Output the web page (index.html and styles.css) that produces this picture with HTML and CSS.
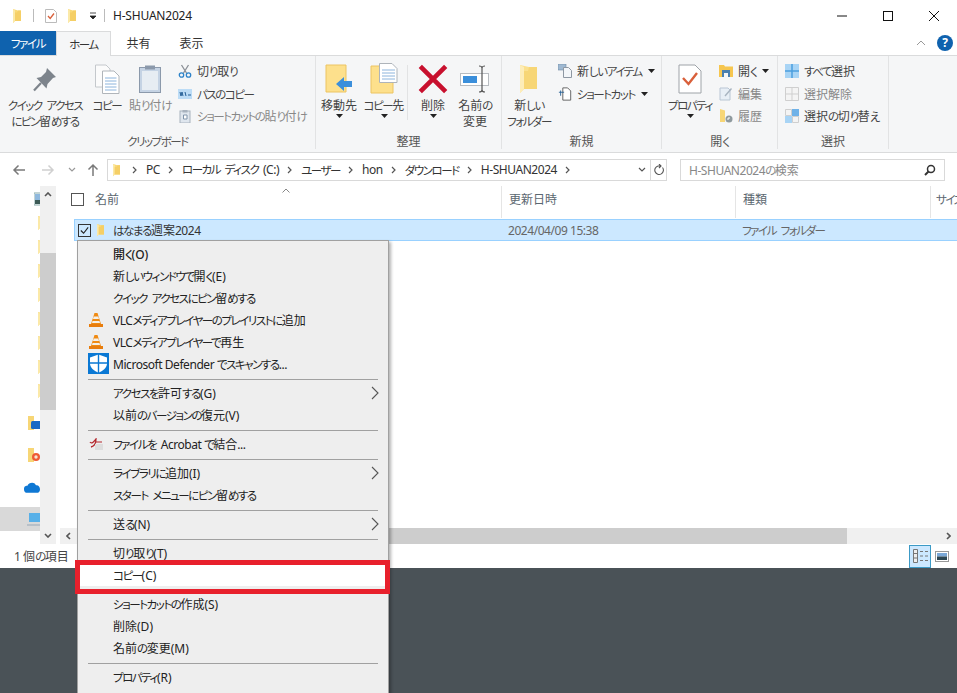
FILE: index.html
```html
<!DOCTYPE html>
<html lang="ja">
<head>
<meta charset="utf-8">
<title>H-SHUAN2024</title>
<link rel="stylesheet" href="styles.css">
</head>
<body>
<svg class="defs" width="0" height="0">
  <defs>
    <symbol id="folder" viewBox="0 0 10 16"><path d="M1 1 L6 2.500 H9 V13 H3 L1 15 Z" fill="#f9d976"/><path d="M1 1 L3 2.500 V13 L1 15 Z" fill="#fbe9a8"/><path d="M6 2.500 H9 V13 H3 L3 4.500 H5 Z" fill="#f5cf66"/></symbol>
    <symbol id="caret" viewBox="0 0 7 4"><path d="M0 0 H7 L3.500 4 Z" fill="#222"/></symbol>
    <symbol id="chev" viewBox="0 0 6 8"><path d="M1 1 L4 4 L1 7" fill="none" stroke="#555" stroke-width="1.200"/></symbol>
    <symbol id="vlc" viewBox="0 0 16 16"><path d="M6.500 1 H9.500 L13 12 H3 Z" fill="#f08a12"/><path d="M5.700 4.500 H10.300 L11 7 H5 Z" fill="#f4f0e8"/><path d="M1 12 H15 V15 H1 Z" fill="#e87d0d"/><path d="M4.500 9 H11.500 L12 11 H4 Z" fill="#f4f0e8"/></symbol>
    <symbol id="sub" viewBox="0 0 8 14"><path d="M1 1 L7 7 L1 13" fill="none" stroke="#555" stroke-width="1.100"/></symbol>
  </defs>
</svg>
<div class="window">
  <header class="titlebar">
    <svg class="qa-folder"><use href="#folder"/></svg>
    <span class="qa-sep"></span>
    <svg class="qa-check" viewBox="0 0 12 14"><path d="M.5.5 H8.500 L11.500 3.500 V13.500 H.5 Z" fill="#fff" stroke="#bbb"/><path d="M3 7 L5.200 9.500 L9 4.500" fill="none" stroke="#d9603b" stroke-width="1.300"/></svg>
    <svg class="qa-folder qa-folder2"><use href="#folder"/></svg>
    <svg class="qa-drop" viewBox="0 0 8 8"><path d="M1 1 H7 M1 4 H7 L4 7 Z" fill="#222" stroke="#222" stroke-width=".8"/></svg>
    <span class="qa-sep qa-sep2"></span>
    <span class="title-text">H-SHUAN2024</span>
    <span class="win-btns">
      <svg class="win-btn" viewBox="0 0 12 12"><path d="M1 6 H11" stroke="#111" fill="none"/></svg>
      <svg class="win-btn" viewBox="0 0 12 12"><rect x="1.500" y="1.500" width="9" height="9" fill="none" stroke="#111"/></svg>
      <svg class="win-btn" viewBox="0 0 12 12"><path d="M1 1 L11 11 M11 1 L1 11" stroke="#111" fill="none"/></svg>
    </span>
  </header>

  <nav class="tabs">
    <span class="tab tab-file">ファイル</span>
    <span class="tab tab-home">ホーム</span>
    <span class="tab tab-share"><span class="h">共有</span></span>
    <span class="tab tab-view"><span class="h">表示</span></span>
    <span class="tabs-right">
      <svg class="collapse" viewBox="0 0 10 6"><path d="M1 5 L5 1 L9 5" fill="none" stroke="#999"/></svg>
      <span class="help">?</span>
    </span>
  </nav>

  <section class="ribbon">
    <div class="group g-clip">
      <div class="group-body">
        <div class="big b-pin">
          <span class="big-icon"><svg class="i30" viewBox="0 0 30 30"><path d="M17 4 L26 13 L23 14 L17.500 20 L16.500 24.500 L6.500 14 L11 13 L16 8 Z" fill="#7d848c"/><path d="M11 19 L4 26.500" stroke="#7d848c" stroke-width="2.200"/></svg></span>
          <span class="big-label">クイック アクセス<br>にピン<span class="h">留</span>めする</span>
        </div>
        <div class="big b-copy">
          <span class="big-icon"><svg class="i30" viewBox="0 0 26 30"><path d="M1.500 1 H12 L16 5 V23 H1.500 Z" fill="#fbfbfb" stroke="#c4c8cc"/><path d="M8.500 7 H20 L25 12 V29.500 H8.500 Z" fill="#fff" stroke="#b0b5ba"/><path d="M11 14 H22.500 M11 17 H22.500 M11 20 H22.500 M11 23 H22.500 M11 26 H22.500" stroke="#8cb4dc"/></svg></span>
          <span class="big-label">コピー</span>
        </div>
        <div class="big b-paste disabled">
          <span class="big-icon"><svg class="i30" viewBox="0 0 24 30"><rect x="1.500" y="3.500" width="21" height="25" fill="#c5d3e4" stroke="#8b99ab"/><rect x="4" y="7" width="16" height="19" fill="#e7edf3"/><rect x="7" y="1.500" width="10" height="4" fill="#8b99ab"/></svg></span>
          <span class="big-label"><span class="h">貼</span>り<span class="h">付</span>け</span>
        </div>
        <div class="small-col sc-clip">
          <div class="small"><svg class="i14" viewBox="0 0 14 14"><path d="M3.500 1 L8.500 9 M10.500 1 L5.500 9" stroke="#8a8f96" stroke-width="1.300"/><circle cx="3.500" cy="11" r="2.200" fill="none" stroke="#2e83c9" stroke-width="1.300"/><circle cx="10.500" cy="11" r="2.200" fill="none" stroke="#2e83c9" stroke-width="1.300"/></svg><span><span class="h">切</span>り<span class="h">取</span>り</span></div>
          <div class="small"><svg class="i14" viewBox="0 0 14 14"><rect x="0" y="2" width="14" height="10" fill="#bcdcf6"/><path d="M2 5 L3 9 L4 5 L5 9 M7 5 L8 9 M10 8 H13" stroke="#245f96" fill="none"/></svg><span>パスのコピー</span></div>
          <div class="small disabled"><svg class="i14" viewBox="0 0 14 14"><rect x="2" y="2" width="10" height="12" fill="#dfe6ee" stroke="#a8b2be"/><rect x="4.500" y="1" width="5" height="2.500" fill="#a8b2be"/><path d="M5.500 6 H9 V10 H5.500 Z" fill="#fff" stroke="#8094aa"/></svg><span>ショートカットの<span class="h">貼</span>り<span class="h">付</span>け</span></div>
        </div>
      </div>
      <div class="group-label">クリップボード</div>
    </div>

    <div class="group g-org">
      <div class="group-body">
        <div class="big b-move">
          <span class="big-icon"><svg class="i30" viewBox="0 0 28 30"><path d="M1 1 H21 V28 H1 Z" fill="#fde08c" stroke="#ecc463"/><path d="M11 20 L19 13 V17 H27 V23 H19 V27 Z" fill="#3b8fdb"/></svg></span>
          <span class="big-label"><span class="h">移動先</span></span>
          <svg class="drop"><use href="#caret"/></svg>
        </div>
        <div class="big b-copyto">
          <span class="big-icon"><svg class="i32" viewBox="0 0 28 32"><path d="M1 3 H23 V30 H1 Z" fill="#fde08c" stroke="#ecc463"/><path d="M9.500 .5 H22 L27 5.500 V19.500 H9.500 Z" fill="#fff" stroke="#aeb4ba"/><path d="M12 7 H25 M12 10 H25 M12 13 H25 M12 16 H25" stroke="#8cb4dc"/></svg></span>
          <span class="big-label">コピー<span class="h">先</span></span>
          <svg class="drop"><use href="#caret"/></svg>
        </div>
        <span class="v-sep"></span>
        <div class="big b-del">
          <span class="big-icon"><svg class="i30" viewBox="0 0 26 26"><path d="M2 2 L24 24 M24 2 L2 24" stroke="#c8102e" stroke-width="4"/></svg></span>
          <span class="big-label"><span class="h">削除</span></span>
          <svg class="drop"><use href="#caret"/></svg>
        </div>
        <div class="big b-ren">
          <span class="big-icon"><svg class="i30w" viewBox="0 0 30 28"><rect x=".5" y="8.500" width="28" height="12" fill="#fff" stroke="#b8bcc1"/><rect x="3" y="11" width="14" height="7" fill="#3b8fdb"/><path d="M19 1 C21 1 22 2 22 3 C22 2 23 1 25 1 M22 3 V25 M19 27 C21 27 22 26 22 25 C22 26 23 27 25 27" fill="none" stroke="#555" stroke-width="1.200"/></svg></span>
          <span class="big-label"><span class="h">名前</span>の<br><span class="h">変更</span></span>
        </div>
      </div>
      <div class="group-label"><span class="h">整理</span></div>
    </div>

    <div class="group g-new">
      <div class="group-body">
        <div class="big b-newf">
          <span class="big-icon"><svg class="i30" viewBox="0 0 20 30"><path d="M1 1 L10 3 H18 V25 H5 L1 29 Z" fill="#fbe08e"/><path d="M1 1 L5 3 V25 L1 29 Z" fill="#fdedb9"/><path d="M10 3 H18 V25 H5 V7 H9 Z" fill="#f7d676"/></svg></span>
          <span class="big-label"><span class="h">新</span>しい<br>フォルダー</span>
        </div>
        <div class="small-col sc-new">
          <div class="small"><svg class="i14" viewBox="0 0 14 14"><rect x="0" y="0" width="8" height="6" fill="#9fb9d2" stroke="#6e8aa6" stroke-width=".6"/><path d="M5.500 3.500 H10.500 L13.500 6.500 V13.500 H5.500 Z" fill="#f3f6f9" stroke="#8e98a3"/></svg><span><span class="h">新</span>しいアイテム</span><svg class="drop-inline"><use href="#caret"/></svg></div>
          <div class="small"><svg class="i14" viewBox="0 0 14 16"><path d="M4.500 1 H10 L13.500 4.500 V15 H4.500 Z" fill="#fff" stroke="#555"/><path d="M0 6 H6 M2 4 V10" stroke="#245f96" stroke-width="1"/></svg><span>ショートカット</span><svg class="drop-inline"><use href="#caret"/></svg></div>
        </div>
      </div>
      <div class="group-label"><span class="h">新規</span></div>
    </div>

    <div class="group g-open">
      <div class="group-body">
        <div class="big b-prop">
          <span class="big-icon"><svg class="i30" viewBox="0 0 24 30"><path d="M1 1 H17 L23 7 V29 H1 Z" fill="#fff" stroke="#9ea3a8"/><path d="M5 14 L10.500 20 L19 9" fill="none" stroke="#d9603b" stroke-width="2.400"/></svg></span>
          <span class="big-label">プロパティ</span>
          <svg class="drop"><use href="#caret"/></svg>
        </div>
        <div class="small-col sc-open">
          <div class="small"><svg class="i14" viewBox="0 0 14 14"><path d="M0 1 H5 L6 2.500 H14 V13 H0 Z" fill="#f6c64f"/><rect x="3" y="6" width="8" height="7" fill="#4a7fb0"/><rect x="5" y="9" width="4" height="4" fill="#f6f6f6"/></svg><span><span class="h">開</span>く</span><svg class="drop-inline"><use href="#caret"/></svg></div>
          <div class="small disabled"><svg class="i14" viewBox="0 0 14 14"><path d="M1 1 H9 L11 3 V13 H1 Z" fill="#e8eff6" stroke="#b9c6d4"/><path d="M6 9 L12.500 1.500" stroke="#a8b4c0" stroke-width="1.400"/></svg><span><span class="h">編集</span></span></div>
          <div class="small disabled"><svg class="i14" viewBox="0 0 14 14"><path d="M1 0 L6 1.500 V13 H1 Z" fill="#f7d676"/><circle cx="10" cy="10" r="3.500" fill="#8f9a9e"/><path d="M10 8 V10 H8" stroke="#fff" fill="none"/></svg><span><span class="h">履歴</span></span></div>
        </div>
      </div>
      <div class="group-label"><span class="h">開</span>く</div>
    </div>

    <div class="group g-sel">
      <div class="group-body">
        <div class="small-col sc-sel">
          <div class="small"><svg class="i14" viewBox="0 0 14 14"><rect width="14" height="14" fill="#a8d4f5"/><path d="M7 0 V14 M0 7 H14" stroke="#4b9ede" stroke-width="1.500"/></svg><span>すべて<span class="h">選択</span></span></div>
          <div class="small disabled"><svg class="i14" viewBox="0 0 14 14"><path d="M.5 .5 H13.500 V13.500 H.5 Z M7 0 V14 M0 7 H14" fill="#f4f4f4" stroke="#cfcfcf"/></svg><span><span class="h">選択解除</span></span></div>
          <div class="small"><svg class="i14" viewBox="0 0 14 14"><rect x="7" y="0" width="7" height="7" fill="#6fb2e8"/><rect x="0" y="7" width="7" height="7" fill="#a8d4f5"/><path d="M.5 .5 H6.500 V6.500 H.5 Z M7.500 7.500 H13.500 V13.500 H7.500 Z" fill="#f4f4f4" stroke="#cfcfcf"/></svg><span><span class="h">選択</span>の<span class="h">切</span>り<span class="h">替</span>え</span></div>
        </div>
      </div>
      <div class="group-label"><span class="h">選択</span></div>
    </div>
  </section>

  <section class="navrow">
    <svg class="nav-ico nav-back" viewBox="0 0 14 12"><path d="M13 6 H2 M6.500 1.500 L2 6 L6.500 10.500" fill="none" stroke="#7a7a7a" stroke-width="1.500"/></svg>
    <svg class="nav-ico nav-fwd" viewBox="0 0 14 12"><path d="M1 6 H12 M7.500 1.500 L12 6 L7.500 10.500" fill="none" stroke="#d0d0d0" stroke-width="1.500"/></svg>
    <svg class="nav-down" viewBox="0 0 8 5"><path d="M1 1 L4 4 L7 1" fill="none" stroke="#999" stroke-width="1.200"/></svg>
    <svg class="nav-ico nav-up" viewBox="0 0 12 14"><path d="M6 13 V2 M1.500 6.500 L6 2 L10.500 6.500" fill="none" stroke="#7a7a7a" stroke-width="1.500"/></svg>
    <div class="addr">
      <svg class="addr-folder"><use href="#folder"/></svg>
      <svg class="crumb-sep cs-1"><use href="#chev"/></svg><span class="crumb"><span class="l">PC</span></span>
      <svg class="crumb-sep"><use href="#chev"/></svg><span class="crumb">ローカル ディスク <span class="l">(C:)</span></span>
      <svg class="crumb-sep"><use href="#chev"/></svg><span class="crumb">ユーザー</span>
      <svg class="crumb-sep"><use href="#chev"/></svg><span class="crumb"><span class="l">hon</span></span>
      <svg class="crumb-sep"><use href="#chev"/></svg><span class="crumb">ダウンロード</span>
      <svg class="crumb-sep"><use href="#chev"/></svg><span class="crumb"><span class="l">H-SHUAN2024</span></span>
      <svg class="crumb-sep"><use href="#chev"/></svg>
      <span class="addr-end">
        <svg class="addr-drop" viewBox="0 0 8 5"><path d="M1 1 L4 4 L7 1" fill="none" stroke="#555" stroke-width="1.200"/></svg>
        <span class="addr-refresh"><svg class="i12" viewBox="0 0 12 12"><path d="M9.500 3.500 A4.300 4.300 0 1 1 5 2 H8 M6 0 L8 2 L6 4" fill="none" stroke="#555" stroke-width="1.100"/></svg></span>
      </span>
    </div>
    <div class="search">
      <span><span class="l">H-SHUAN2024</span>の<span class="h">検索</span></span>
      <svg class="i12" viewBox="0 0 12 12"><circle cx="7" cy="5" r="3.500" fill="none" stroke="#333" stroke-width="1.500"/><path d="M4.500 7.500 L1 11" stroke="#333" stroke-width="2"/></svg>
    </div>
  </section>

  <main class="main">
    <aside class="side">
      <div class="side-list">
        <div class="side-row"><svg class="i16" viewBox="0 0 16 16"><rect y="2" width="16" height="12" fill="#fff" stroke="#8aa"/><rect x="1" y="3" width="14" height="6" fill="#8fb8dd"/><rect x="1" y="9" width="14" height="4" fill="#3c5a56"/></svg></div>
        <div class="side-row"><svg class="i16"><use href="#folder"/></svg></div>
        <div class="side-row"><svg class="i16"><use href="#folder"/></svg></div>
        <div class="side-row"><svg class="i16"><use href="#folder"/></svg></div>
        <div class="side-row"><svg class="i16"><use href="#folder"/></svg></div>
        <div class="side-row"><svg class="i16"><use href="#folder"/></svg></div>
        <div class="side-row"><svg class="i16"><use href="#folder"/></svg></div>
        <div class="side-row"><svg class="i16"><use href="#folder"/></svg></div>
        <div class="side-row"><svg class="i16"><use href="#folder"/></svg></div>
        <div class="side-row side-gap sr-new"><svg class="i16w" viewBox="0 0 14 16"><path d="M1 1 H7 V15 H1 Z" fill="#f7d676"/><rect x="4" y="6" width="10" height="8" rx="1.500" fill="#1769c4"/></svg></div>
        <div class="side-row side-gap sr-new"><svg class="i16w" viewBox="0 0 14 16"><path d="M1 1 H7 V15 H1 Z" fill="#f7d676"/><circle cx="9" cy="10" r="4" fill="#ee5a35"/><circle cx="9" cy="10" r="1.700" fill="#f7e2d0"/></svg></div>
        <div class="side-row side-gap sr-cloud"><svg class="i16w" viewBox="0 0 14 10"><path d="M0 7 C0 4 2 4 3 4 C4 1 9 0 10.500 3.500 C12.500 3 14 5 14 7 C14 9 13 10 12 10 H2 C1 10 0 9 0 7 Z" fill="#0f78d4"/></svg></div>
        <div class="side-row side-gap sr-pc"><svg class="i16w" viewBox="0 0 14 16"><rect x="2" y="2" width="12" height="9" fill="#58b0e8"/><path d="M0 13 H14 V15 H0 Z" fill="#b8c0c8"/></svg></div>
      </div>
      <div class="side-scroll">
        <svg class="sb-arrow" viewBox="0 0 8 5"><path d="M1 4 L4 1 L7 4" fill="none" stroke="#555" stroke-width="1.600"/></svg>
        <div class="sb-track"><div class="sb-thumb"></div></div>
        <svg class="sb-arrow" viewBox="0 0 8 5"><path d="M1 1 L4 4 L7 1" fill="none" stroke="#555" stroke-width="1.600"/></svg>
      </div>
    </aside>
    <div class="content">
      <div class="head">
        <span class="h-check"><span class="cb"></span></span>
        <span class="col col-name"><span class="h">名前</span></span>
        <span class="col col-date"><span class="h">更新日時</span></span>
        <span class="col col-type"><span class="h">種類</span></span>
        <span class="col col-size">サイズ</span>
        <svg class="sort" viewBox="0 0 8 5"><path d="M.5 4.500 L4 1 L7.500 4.500" fill="none" stroke="#888"/></svg>
      </div>
      <div class="row">
        <span class="cb cb-on"><svg viewBox="0 0 12 12"><path d="M2 6 L5 9 L10 2.500" fill="none" stroke="#222" stroke-width="1.200"/></svg></span>
        <svg class="row-folder"><use href="#folder"/></svg>
        <span class="row-name">はなまる<span class="h">週案</span><span class="l">2024</span></span>
        <span class="row-date"><span class="l">2024/04/09 15:38</span></span>
        <span class="row-type">ファイル フォルダー</span>
      </div>
      <div class="spacer"></div>
      <div class="hscroll">
        <svg class="hs-arrow" viewBox="0 0 5 8"><path d="M4 1 L1 4 L4 7" fill="none" stroke="#555" stroke-width="1.600"/></svg>
        <div class="hs-track"><div class="hs-thumb"></div></div>
        <svg class="hs-arrow" viewBox="0 0 5 8"><path d="M1 1 L4 4 L1 7" fill="none" stroke="#555" stroke-width="1.600"/></svg>
      </div>
    </div>
  </main>

  <footer class="status">
    <span class="status-text"><span class="l">1 </span><span class="h">個</span>の<span class="h">項目</span></span>
    <span class="views">
      <span class="view view-on"><svg viewBox="0 0 17 14" class="view-ico"><path d="M1.500 .5 H5.500 V13.500 H1.500 Z M1.500 4.500 H5.500 M1.500 9 H5.500" fill="#eee" stroke="#777"/><path d="M8 2.500 H11 M13 2.500 H16 M8 7 H11 M13 7 H16 M8 11.500 H11 M13 11.500 H16" stroke="#777"/></svg></span>
      <span class="view"><svg viewBox="0 0 14 11" class="view-pic"><rect x=".5" y=".5" width="13" height="10" fill="#fff" stroke="#999"/><rect x="2" y="2" width="10" height="3.500" fill="#7aa8d8"/><rect x="2" y="5.500" width="10" height="3.500" fill="#2c4652"/></svg></span>
    </span>
  </footer>
  <div class="desktop"></div>

  <div class="menu">
    <div class="mi mi-bold"><span class="h">開</span>く<span class="p">(O)</span></div>
    <div class="mi"><span class="h">新</span>しいウィンドウで<span class="h">開</span>く<span class="p">(E)</span></div>
    <div class="mi">クイック アクセスにピン<span class="h">留</span>めする</div>
    <div class="mi"><svg class="mi-ico"><use href="#vlc"/></svg><span class="l">VLC</span>メディアプレイヤーのプレイリストに<span class="h">追加</span></div>
    <div class="mi"><svg class="mi-ico"><use href="#vlc"/></svg><span class="l">VLC</span>メディアプレイヤーで<span class="h">再生</span></div>
    <div class="mi"><svg class="mi-def" viewBox="0 0 21 21"><rect width="21" height="21" fill="#0a78d4"/><path d="M10.500 1.500 L19 4.500 V10.500 C19 15 14.500 18 10.500 19.800 C6.500 18 2 15 2 10.500 V4.500 Z" fill="#fff"/><path d="M10.500 1 V20 M1.500 10 H19.500" stroke="#0a78d4" stroke-width="1.400"/></svg><span class="l">Microsoft Defender </span>でスキャンする<span class="l">...</span></div>
    <div class="sep"></div>
    <div class="mi">アクセスを<span class="h">許可</span>する<span class="p">(G)</span><svg class="mi-sub"><use href="#sub"/></svg></div>
    <div class="mi"><span class="h">以前</span>のバージョンの<span class="h">復元</span><span class="p">(V)</span></div>
    <div class="sep"></div>
    <div class="mi"><svg class="mi-acr" viewBox="0 0 14 12"><path d="M1 4 C3 7 6 2 7 1 C7 4 6 8 2 9" fill="none" stroke="#b3272d" stroke-width="1.300"/><rect x="6" y="6" width="8" height="6" fill="#ddd"/><path d="M7 4 H13" stroke="#b3272d"/></svg>ファイルを <span class="l">Acrobat </span>で<span class="h">結合</span><span class="l">...</span></div>
    <div class="sep"></div>
    <div class="mi">ライブラリに<span class="h">追加</span><span class="p">(I)</span><svg class="mi-sub"><use href="#sub"/></svg></div>
    <div class="mi">スタート メニューにピン<span class="h">留</span>めする</div>
    <div class="sep"></div>
    <div class="mi"><span class="h">送</span>る<span class="p">(N)</span><svg class="mi-sub"><use href="#sub"/></svg></div>
    <div class="sep"></div>
    <div class="mi"><span class="h">切</span>り<span class="h">取</span>り<span class="p">(T)</span></div>
    <div class="mi mi-copy">コピー<span class="p">(C)</span></div>
    <div class="sep"></div>
    <div class="mi">ショートカットの<span class="h">作成</span><span class="p">(S)</span></div>
    <div class="mi"><span class="h">削除</span><span class="p">(D)</span></div>
    <div class="mi"><span class="h">名前</span>の<span class="h">変更</span><span class="p">(M)</span></div>
    <div class="sep"></div>
    <div class="mi">プロパティ<span class="p">(R)</span></div>
  </div>
  <div class="redbox"></div>
</div>
</body>
</html>
```

FILE: styles.css
```css
* { box-sizing: border-box; }
html, body { margin: 0; padding: 0; }
body {
  font-family: "Noto Sans", "Noto Sans CJK JP", sans-serif;
  font-size: 11.500px;
  letter-spacing: -1.450px;
  word-spacing: 3px;
  font-feature-settings: "palt";
  color: #333;
  background: #4a5257;
}
/* run classes: kanji stay full width, Latin is only slightly tightened */
.h { font-size: 12px; letter-spacing: 0; }
.l { font-size: 12px; letter-spacing: -.45px; word-spacing: 0; }
.p { font-size: 12px; letter-spacing: 0; }
.defs { position: absolute; }
.window {
  position: relative;
  width: 957px;
  height: 693px;
  overflow: hidden;
  display: flex;
  flex-direction: column;
  background: #fff;
}
svg { display: block; flex: none; }

/* title bar */
.titlebar { height: 31px; display: flex; align-items: center; padding-left: 12px; background: #fff; }
.qa-folder { width: 10px; height: 16px; }
.qa-sep { width: 1px; height: 13px; background: #bbb; margin-left: 11px; }
.qa-check { width: 12px; height: 14px; margin-left: 11px; }
.qa-folder2 { margin-left: 10px; }
.qa-drop { width: 8px; height: 8px; margin-left: 12px; }
.qa-sep2 { margin-left: 7px; }
.title-text { margin-left: 8px; font-size: 12px; letter-spacing: -.2px; color: #222; }
.win-btns { margin-left: auto; display: flex; gap: 34px; padding-right: 17px; }
.win-btn { width: 12px; height: 12px; }

/* tabs */
.tabs { height: 24px; display: flex; align-items: stretch; }
.tab { display: flex; align-items: center; justify-content: center; }
.tab-file { width: 56px; background: #0f62ae; color: #fff; }
.tab-home { width: 55px; background: #f5f6f7; border: 1px solid #dadbdc; border-bottom: 0; margin-bottom: -1px; position: relative; z-index: 1; }
.tab-share { width: 55px; }
.tab-view { width: 51px; }
.tabs-right { margin-left: auto; display: flex; align-items: center; gap: 11px; padding-right: 4px; }
.collapse { width: 10px; height: 6px; }
.help { width: 16px; height: 16px; border-radius: 50%; background: #0f62ae; color: #fff; font-weight: 700; font-size: 12px; letter-spacing: 0; line-height: 16px; text-align: center; }

/* ribbon */
.ribbon { height: 98px; display: flex; background: #f5f6f7; border-top: 1px solid #dadbdc; border-bottom: 1px solid #dadbdc; }
.group { display: flex; flex-direction: column; border-right: 1px solid #e2e3e4; margin-bottom: 3px; flex: none; }
.g-clip { width: 316px; }
.g-org { width: 186px; }
.g-new { width: 160px; }
.g-open { width: 116px; }
.g-sel { width: 111px; }
.group-body { flex: 1; display: flex; min-height: 0; }
.group-label { height: 18px; line-height: 22px; text-align: center; color: #555; }
.big { display: flex; flex-direction: column; align-items: center; flex: none; }
.big-icon { height: 42px; padding-top: 3px; display: flex; align-items: center; justify-content: center; }
.big-label { line-height: 16px; text-align: center; white-space: nowrap; color: #444; }
.drop { width: 7px; height: 4px; margin-top: 0; }
.disabled, .disabled span { color: #888; }
.i30 { width: 30px; height: 30px; }
.i30w { width: 30px; height: 28px; }
.i32 { width: 28px; height: 32px; }
.i14 { width: 14px; height: 14px; }
.i12 { width: 12px; height: 12px; }
.i16 { width: 16px; height: 16px; }
.i16w { width: 16px; height: 16px; }
.b-pin { width: 80px; margin-left: 5px; }
.b-copy { width: 44px; }
.b-paste { width: 42px; }
.sc-clip { margin-left: 7px; }
.small-col { display: flex; flex-direction: column; padding-top: 4px; }
.small { height: 22.500px; display: flex; align-items: center; gap: 5px; white-space: nowrap; color: #444; }
.drop-inline { width: 7px; height: 4px; margin-left: 1px; }
.b-move { width: 44px; margin-left: 1px; }
.b-copyto { width: 46px; }
.v-sep { width: 1px; height: 55px; margin-top: 9px; background: #e2e3e4; flex: none; }
.b-del { width: 50px; }
.b-ren { width: 34px; }
.b-newf { width: 52px; margin-left: 1px; }
.sc-new { margin-left: 3px; }
.b-prop { width: 50px; margin-left: 3px; }
.sc-open { margin-left: 4px; }
.sc-sel { margin-left: 7px; }

/* nav row */
.navrow { height: 33px; display: flex; align-items: center; background: #fff; }
.nav-ico { width: 14px; height: 12px; }
.nav-back { margin-left: 12px; }
.nav-fwd { margin-left: 15px; }
.nav-down { width: 8px; height: 5px; margin-left: 13px; }
.nav-up { margin-left: 11px; width: 12px; height: 14px; }
.addr {
  margin-left: 8px; width: 560px; height: 22px;
  border: 1px solid #d9d9d9; display: flex; align-items: center; padding-left: 4px; color: #333;
}
.addr-folder { width: 9px; height: 14px; }
.crumb-sep { width: 6px; height: 8px; margin: 0 8px; }
.cs-1 { margin-left: 11px; }
.crumb { white-space: nowrap; }
.addr-end { margin-left: auto; display: flex; align-items: center; height: 100%; }
.addr-drop { width: 8px; height: 5px; margin-right: 4px; }
.addr-refresh { width: 16px; height: 100%; border-left: 1px solid #d9d9d9; display: flex; align-items: center; justify-content: center; }
.search { margin-left: 13px; width: 265px; height: 22px; border: 1px solid #d9d9d9; display: flex; align-items: center; justify-content: space-between; padding: 0 8px; color: #888; }

/* main */
.main { flex: 1; display: flex; min-height: 0; }
.side { width: 58px; flex: none; display: flex; }
.side-list { width: 40px; overflow: hidden; padding-top: 1px; }
.side-row { height: 24px; padding-left: 34px; display: flex; align-items: center; }
.side-gap { margin-top: 8px; }
.sr-new { padding-left: 26px; }
.sr-cloud { padding-left: 24px; }
.sr-pc { margin-left: -26px; width: 66px; padding-left: 52px; background: #d9d9d9; }
.side-scroll { width: 16px; background: #f0f0f0; display: flex; flex-direction: column; align-items: center; }
.sb-arrow { width: 8px; height: 5px; margin: 6px 0; }
.sb-track { flex: 1; width: 16px; padding-top: 50px; }
.sb-thumb { height: 157px; background: #cdcdcd; }
.content { flex: 1; display: flex; flex-direction: column; min-width: 0; padding-left: 2px; }
.head { height: 33px; position: relative; flex: none; color: #5b6770; }
.h-check { position: absolute; left: 11px; top: 7px; }
.cb { display: block; width: 13px; height: 13px; border: 1px solid #555; background: #fff; }
.col { position: absolute; top: 0; height: 32px; line-height: 28px; }
.col-name { left: 35px; }
.col-date { left: 441px; width: 234px; border-left: 1px solid #e5e5e5; padding-left: 7px; }
.col-type { left: 675px; width: 195px; border-left: 1px solid #e5e5e5; padding-left: 7px; }
.col-size { left: 870px; border-left: 1px solid #e5e5e5; padding-left: 5px; white-space: nowrap; }
.sort { position: absolute; left: 222px; top: 2px; width: 8px; height: 5px; }
.row {
  margin-left: 14px; height: 22px; background: #cce8ff; border: 1px solid #99d1ff;
  display: flex; align-items: center; position: relative; flex: none; border-right: 0;
}
.cb-on { margin-left: 3px; background: transparent; border-color: #333; }
.cb-on svg { width: 11px; height: 11px; }
.row-folder { width: 9px; height: 14px; margin-left: 5px; }
.row-name { margin-left: 8px; color: #333; }
.row-date { position: absolute; left: 433px; color: #666; }
.row-type { position: absolute; left: 667px; color: #666; }
.spacer { flex: 1; }
.hscroll { height: 16px; flex: none; display: flex; align-items: center; background: #f0f0f0; }
.hs-arrow { width: 5px; height: 8px; margin: 0 6px; }
.hs-track { flex: 1; height: 16px; }
.hs-thumb { height: 16px; width: 770px; background: #cdcdcd; }

/* status */
.status { height: 24px; display: flex; align-items: center; padding-left: 14px; flex: none; background: #fff; }
.status-text { color: #444; }
.views { margin-left: auto; display: flex; align-items: center; gap: 4px; padding-right: 8px; }
.view { width: 22px; height: 23px; display: flex; align-items: center; justify-content: center; }
.view-on { background: #cce8ff; border: 1px solid #3c9ac6; }
.view-ico { width: 17px; height: 14px; }
.view-pic { width: 14px; height: 11px; }
.view:last-child { width: 14px; }
.desktop { height: 125px; flex: none; background: #4a5257; }

/* context menu */
.menu {
  position: absolute; left: 77px; top: 240px; width: 312px; height: 470px;
  background: #eeeeee; border: 1px solid #a0a0a0; padding-top: 2px;
  box-shadow: 2px 2px 3px rgba(0,0,0,.3);
  color: #222;
}
.mi { height: 22px; line-height: 24px; padding-left: 35px; position: relative; white-space: nowrap; }
.mi-bold { font-weight: 500; }
.mi-copy { background: #fff; }
.sep { height: 1px; background: #a0a0a0; margin: 4px 10px 2px 10px; }
.mi-ico { position: absolute; left: 10px; top: 3px; width: 16px; height: 16px; }
.mi-def { position: absolute; left: 10px; top: 0; width: 21px; height: 21px; }
.mi-acr { position: absolute; left: 11px; top: 5px; width: 14px; height: 12px; }
.mi-sub { position: absolute; right: 9px; top: 4px; width: 8px; height: 14px; }
.redbox { position: absolute; left: 75px; top: 560px; width: 315px; height: 34px; border: 5px solid #e8202c; }
```
